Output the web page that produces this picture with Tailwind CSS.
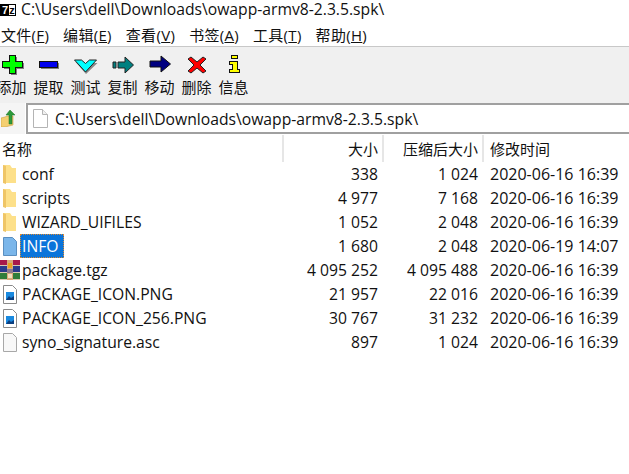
<!DOCTYPE html>
<html lang="zh-CN">
<head>
    <meta charset="UTF-8">
    <title>owapp-armv8-2.3.5.spk</title>
    <script src="https://cdn.jsdelivr.net/npm/@tailwindcss/browser@4"></script>
</head>
<body class="bg-white w-[629px] h-[474px] overflow-hidden text-[15px] leading-6 text-[#111] font-['Open_Sans','Noto_Sans_CJK_SC',sans-serif]">

<!-- Title bar -->
<div class="flex items-center h-[23px] pb-[4px] gap-[5px]">
    <div class="w-[16px] h-[12px] border border-black flex font-['Liberation_Sans',sans-serif] text-[11px] leading-[10px] font-bold">
        <span class="w-[8px] bg-black text-white text-center">7</span>
        <span class="w-[6px] text-black text-center">z</span>
    </div>
    <span class="whitespace-nowrap text-[15.7px] leading-[17px]">C:\Users\dell\Downloads\owapp-armv8-2.3.5.spk\</span>
</div>

<!-- Menu -->
<div class="flex items-center h-[23px] pl-[1px] gap-[14px] whitespace-nowrap tracking-[0.3px]">
    <span>文件(<u>F</u>)</span>
    <span>编辑(<u>E</u>)</span>
    <span>查看(<u>V</u>)</span>
    <span>书签(<u>A</u>)</span>
    <span>工具(<u>T</u>)</span>
    <span>帮助(<u>H</u>)</span>
</div>

<!-- Toolbar -->
<div class="h-[57px] bg-[#f0f0f0] border-t border-[#c8c8c8] whitespace-nowrap">
    <div class="flex -ml-[7px]">
        <div class="w-[37px] flex flex-col items-center">
            <svg class="w-[24px] h-[21px] mt-[7px]" viewBox="0 0 24 21" shape-rendering="crispEdges"><path d="M11 3h6v6h7v6h-7v6h-6v-6H4V9h7z" fill="#808080"/><path d="M9 1h6v6h7v6h-7v6H9v-6H2V7h7z" fill="#00ff00" stroke="#111"/></svg>
            <span>添加</span>
        </div>
        <div class="w-[37px] flex flex-col items-center">
            <svg class="w-[24px] h-[21px] mt-[7px]" viewBox="0 0 24 21" shape-rendering="crispEdges"><path d="M4 9h18v6H4z" fill="#808080"/><path d="M2 7h18v6H2z" fill="#0000ee" stroke="#111"/></svg>
            <span>提取</span>
        </div>
        <div class="w-[37px] flex flex-col items-center">
            <svg class="w-[24px] h-[21px] mt-[7px]" viewBox="0 0 24 21"><path d="M1.5 8l6 1 4.5 3.5L16 9h7.5L12 20z" fill="#888"/><path d="M.5 6h7l4 3.5 4-3.5h7l-11 12z" fill="#00ffff" stroke="#222"/></svg>
            <span>测试</span>
        </div>
        <div class="w-[37px] flex flex-col items-center">
            <svg class="w-[24px] h-[21px] mt-[7px]" viewBox="0 0 24 21"><path d="M2 8h3v6H2zM7 8h7V3l8.5 8-8.5 8v-5H7z" fill="#008080" stroke="#222"/></svg>
            <span>复制</span>
        </div>
        <div class="w-[37px] flex flex-col items-center">
            <svg class="w-[24px] h-[21px] mt-[7px]" viewBox="0 0 24 21"><path d="M2 7h11V2l9.5 8-9.5 8v-5H2z" fill="#000080" stroke="#111"/></svg>
            <span>移动</span>
        </div>
        <div class="w-[37px] flex flex-col items-center">
            <svg class="w-[24px] h-[21px] mt-[7px]" viewBox="0 0 24 21"><path d="M6 3l6 5 6-5 3 2-6 6 6 6-3 2-6-5-6 5-3-2 6-6-6-6z" fill="#ff0000" stroke="#222"/></svg>
            <span>删除</span>
        </div>
        <div class="w-[37px] flex flex-col items-center">
            <svg class="w-[24px] h-[21px] mt-[7px]" viewBox="0 0 24 21" shape-rendering="crispEdges"><path d="M9 1h6v3H9zM7 7h8v8h2v3H7v-3h3v-5H7z" fill="#ffff00" stroke="#111"/></svg>
            <span>信息</span>
        </div>
    </div>
</div>

<!-- Address bar -->
<div class="h-[31px] flex bg-[#f5f5f5]">
    <div class="w-[26px] pt-[6px] pl-[1px] border-r border-white">
        <svg class="w-[16px] h-[18px]" viewBox="0 0 16 18"><path d="M0 9l4-1 2-1h6v9l-8 2H0z" fill="#f4cf70" stroke="#c9a040" stroke-width="0.6"/><path d="M9 1l5 5h-3v9H8V6H5z" fill="#2e9a3a" stroke="#1c7028" stroke-width="0.5"/></svg>
    </div>
    <div class="flex-1 bg-white border-y-2 border-l-2 border-[#a0a0a0] flex items-center pl-[5px] gap-[7px] whitespace-nowrap">
        <svg class="w-[15px] h-[19px]" viewBox="0 0 15 19"><path d="M.5.5h9l5 5v13H.5z" fill="#fff" stroke="#b4b4b4"/><path d="M9.5.5v5h5" fill="#f0f0f0" stroke="#b4b4b4"/></svg>
        <span class="text-[15.7px]">C:\Users\dell\Downloads\owapp-armv8-2.3.5.spk\</span>
    </div>
</div>

<!-- Column headers -->
<div class="grid grid-cols-[284px_100px_100px_145px] h-[27px] items-center mt-[1px] whitespace-nowrap">
    <div class="h-full pl-[2px] flex items-center border-r-2 border-[#e6e6e6]">名称</div>
    <div class="h-full pr-[4px] flex items-center justify-end border-r-2 border-[#e6e6e6]">大小</div>
    <div class="h-full pr-[4px] flex items-center justify-end border-r-2 border-[#e6e6e6]">压缩后大小</div>
    <div class="h-full pl-[6px] flex items-center">修改时间</div>
</div>

<!-- File list -->
<div class="whitespace-nowrap text-[15.7px]">
    <div class="grid grid-cols-[284px_100px_100px_145px] h-6 items-center">
        <div class="flex items-center pl-[3px] gap-[5px]">
            <svg class="w-[14px] h-[19px]" viewBox="0 0 14 19"><path d="M0 0h7l2 3h4v15H0z" fill="#fde08a"/><path d="M0 0l3 1v18l-3-1z" fill="#efc566"/></svg>
            <span>conf</span>
        </div>
        <div class="text-right pr-[6px]">338</div><div class="text-right pr-[6px]">1 024</div><div class="pl-[6px] text-[16px]">2020-06-16 16:39</div>
    </div>
    <div class="grid grid-cols-[284px_100px_100px_145px] h-6 items-center">
        <div class="flex items-center pl-[3px] gap-[5px]">
            <svg class="w-[14px] h-[19px]" viewBox="0 0 14 19"><path d="M0 0h7l2 3h4v15H0z" fill="#fde08a"/><path d="M0 0l3 1v18l-3-1z" fill="#efc566"/></svg>
            <span>scripts</span>
        </div>
        <div class="text-right pr-[6px]">4 977</div><div class="text-right pr-[6px]">7 168</div><div class="pl-[6px] text-[16px]">2020-06-16 16:39</div>
    </div>
    <div class="grid grid-cols-[284px_100px_100px_145px] h-6 items-center">
        <div class="flex items-center pl-[3px] gap-[5px]">
            <svg class="w-[14px] h-[19px]" viewBox="0 0 14 19"><path d="M0 0h7l2 3h4v15H0z" fill="#fde08a"/><path d="M0 0l3 1v18l-3-1z" fill="#efc566"/></svg>
            <span>WIZARD_UIFILES</span>
        </div>
        <div class="text-right pr-[6px]">1 052</div><div class="text-right pr-[6px]">2 048</div><div class="pl-[6px] text-[16px]">2020-06-16 16:39</div>
    </div>
    <div class="grid grid-cols-[284px_100px_100px_145px] h-6 items-center">
        <div class="flex items-center pl-[3px] gap-[3px]">
            <svg class="w-[14px] h-[19px]" viewBox="0 0 14 19"><path d="M.5.5h9l4 4v14H.5z" fill="#7ab6ea" stroke="#5a8fc0"/></svg>
            <span class="bg-[#0a74da] text-white pl-[2px] pr-[5px] h-6 outline-1 outline-dotted outline-[#e08a30] -outline-offset-1">INFO</span>
        </div>
        <div class="text-right pr-[6px]">1 680</div><div class="text-right pr-[6px]">2 048</div><div class="pl-[6px] text-[16px]">2020-06-19 14:07</div>
    </div>
    <div class="grid grid-cols-[284px_100px_100px_145px] h-6 items-center">
        <div class="flex items-center gap-[2px]">
            <svg class="w-[20px] h-[20px]" viewBox="0 0 20 20" shape-rendering="crispEdges">
                <path d="M0 0h20v6H0z" fill="#a8174a"/><path d="M0 6h20v7H0z" fill="#2a3a8c"/><path d="M0 13h20v7H0z" fill="#2f7d3a"/>
                <path d="M0 5h20v1H0zM0 12h20v1H0zM0 19h20v1H0z" fill="#d8c8b0"/>
                <path d="M7 0h6v20H7z" fill="#d8a878"/><path d="M8 3h4v5H8z" fill="#e8a020"/><path d="M7 9h6v4H7z" fill="#8a7a90"/><path d="M8 14h4v4H8z" fill="#f0e0c0"/>
            </svg>
            <span>package.tgz</span>
        </div>
        <div class="text-right pr-[6px]">4 095 252</div><div class="text-right pr-[6px]">4 095 488</div><div class="pl-[6px] text-[16px]">2020-06-16 16:39</div>
    </div>
    <div class="grid grid-cols-[284px_100px_100px_145px] h-6 items-center">
        <div class="flex items-center pl-[3px] gap-[5px]">
            <svg class="w-[14px] h-[19px]" viewBox="0 0 14 19"><path d="M.5.5h9l4 4v14H.5z" fill="#fff" stroke="#8a8a8a"/><path d="M3 7h8v8H3z" fill="#1a8ae0"/><path d="M3 15l3-4 2 2 3-2v4z" fill="#0b3f80"/></svg>
            <span>PACKAGE_ICON.PNG</span>
        </div>
        <div class="text-right pr-[6px]">21 957</div><div class="text-right pr-[6px]">22 016</div><div class="pl-[6px] text-[16px]">2020-06-16 16:39</div>
    </div>
    <div class="grid grid-cols-[284px_100px_100px_145px] h-6 items-center">
        <div class="flex items-center pl-[3px] gap-[5px]">
            <svg class="w-[14px] h-[19px]" viewBox="0 0 14 19"><path d="M.5.5h9l4 4v14H.5z" fill="#fff" stroke="#8a8a8a"/><path d="M3 7h8v8H3z" fill="#1a8ae0"/><path d="M3 15l3-4 2 2 3-2v4z" fill="#0b3f80"/></svg>
            <span>PACKAGE_ICON_256.PNG</span>
        </div>
        <div class="text-right pr-[6px]">30 767</div><div class="text-right pr-[6px]">31 232</div><div class="pl-[6px] text-[16px]">2020-06-16 16:39</div>
    </div>
    <div class="grid grid-cols-[284px_100px_100px_145px] h-6 items-center">
        <div class="flex items-center pl-[3px] gap-[5px]">
            <svg class="w-[14px] h-[19px]" viewBox="0 0 14 19"><path d="M.5.5h9l4 4v14H.5z" fill="#f8f8f8" stroke="#a8a8a8"/></svg>
            <span>syno_signature.asc</span>
        </div>
        <div class="text-right pr-[6px]">897</div><div class="text-right pr-[6px]">1 024</div><div class="pl-[6px] text-[16px]">2020-06-16 16:39</div>
    </div>
</div>
</body>
</html>
